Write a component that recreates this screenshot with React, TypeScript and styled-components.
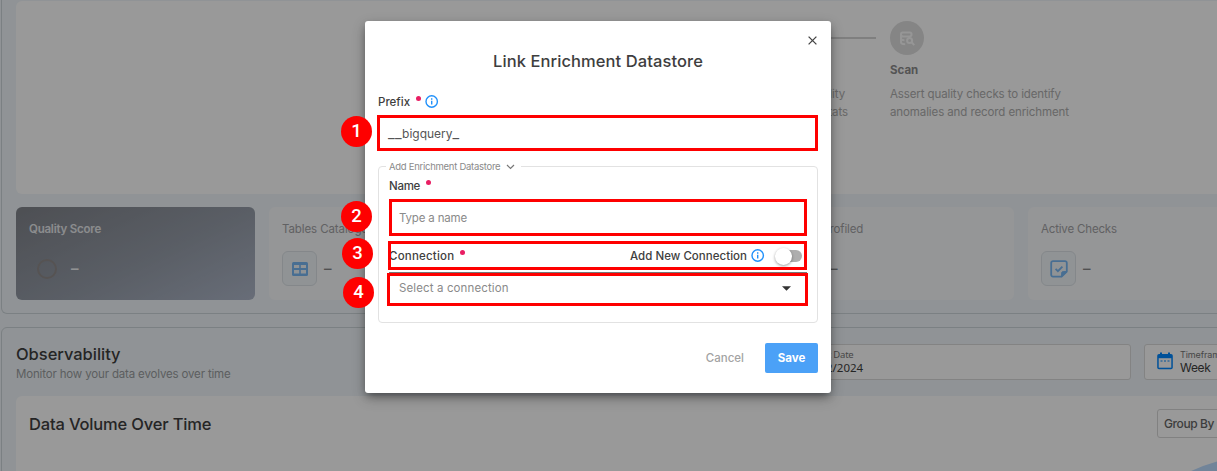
import React from 'react';
import styled, { createGlobalStyle } from 'styled-components';

const GlobalStyle = createGlobalStyle`
  * { box-sizing: border-box; }
  body { margin: 0; overflow: hidden; background: #f0f6fa; font-family: Inter, 'Noto Sans', sans-serif; color: #3e3e3e; }
`;

const Text = styled.span<{ $size?: number; $weight?: number; $track?: number; $color?: string; $line?: number }>`
  font-size: ${p => p.$size ?? 11.5}px;
  font-weight: ${p => p.$weight ?? 400};
  letter-spacing: ${p => p.$track ?? 0}px;
  line-height: ${p => p.$line ?? 18}px;
  color: ${p => p.$color ?? '#3e3e3e'};
  white-space: nowrap;
`;

/* Dashboard */
const Viewport = styled.div`
  position: relative;
  width: 1217px;
  height: 471px;
  overflow: hidden;
`;
const Page = styled.main`
  width: 1282px;
  padding-left: 1px;
  display: flex;
  flex-direction: column;
  gap: 13px;
`;
const Panel = styled.section<{ $first?: boolean }>`
  display: flex;
  flex-direction: column;
  gap: ${p => (p.$first ? 13 : 16)}px;
  padding: ${p => (p.$first ? '1px 14px 13px' : '16px 14px')};
  border: 1px solid #cdd5da;
  border-top-width: ${p => (p.$first ? 0 : 1)}px;
  border-radius: ${p => (p.$first ? '0 0 6px 6px' : '6px')};
`;
const StepsCard = styled.div`
  height: 193px;
  padding: 20px 0 0 651px;
  display: flex;
  background: #fff;
  border-radius: 6px;
`;
const Step = styled.div`
  width: 223px;
  display: flex;
  flex-direction: column;
`;
const StepTop = styled.div`
  display: flex;
  align-items: center;
  margin-bottom: 6px;
`;
const StepCircle = styled.div`
  width: 34px;
  height: 34px;
  border-radius: 50%;
  background: #dedede;
  display: grid;
  place-items: center;
`;
const StepLine = styled.div`
  flex: 1;
  height: 2px;
  margin: 0 14px;
  background: #d4d4d4;
`;
const StepText = styled.div<{ $right?: boolean }>`
  width: 181px;
  margin-top: 6px;
  display: flex;
  flex-direction: column;
  align-items: ${p => (p.$right ? 'flex-end' : 'flex-start')};
  & > span:first-child { padding-right: ${p => (p.$right ? 3 : 0)}px; }
`;
const Stats = styled.div`
  display: grid;
  grid-template-columns: repeat(5, 239px);
  gap: 14px;
`;
const StatCard = styled.div<{ $dark?: boolean }>`
  height: 93px;
  padding: 13px;
  display: flex;
  flex-direction: column;
  gap: 13px;
  border-radius: 6px;
  background: ${p => (p.$dark ? 'linear-gradient(155deg, #81848b, #969da9 55%, #aeb7c9)' : '#f9fafc')};
`;
const StatTitle = styled.div<{ $end?: boolean }>`
  width: ${p => (p.$end ? '75px' : 'auto')};
  height: 18px;
  display: flex;
  line-height: 18px;
`;
const StatRow = styled.div`
  display: flex;
  align-items: center;
  gap: 7px;
`;
const IconBox = styled.div<{ $plain?: boolean }>`
  width: 35px;
  height: 35px;
  display: grid;
  place-items: center;
  border-radius: 6px;
  border: ${p => (p.$plain ? 0 : 1)}px solid #dce2e7;
  background: ${p => (p.$plain ? 'none' : '#f0f5f9')};
`;
const Ring = styled.div`
  width: 20px;
  height: 20px;
  border: 2px solid #8f8b8a;
  border-radius: 50%;
`;
const SectionHead = styled.header`
  height: 36px;
  display: flex;
  gap: 13px;
`;
const Headings = styled.div`
  flex: 1;
  display: flex;
  flex-direction: column;
`;
const Field = styled.div<{ $width: number }>`
  width: ${p => p.$width}px;
  height: 36px;
  padding-left: 12px;
  display: flex;
  align-items: center;
  gap: 7px;
  background: #fff;
  border: 1px solid #dadada;
  border-radius: 3px;
  & > svg { margin-top: -2px; }
`;
const FieldText = styled.div<{ $system?: boolean }>`
  display: flex;
  flex-direction: column;
  margin-top: -1px;
  ${p => (p.$system ? "& > span { font-family: 'Noto Sans', sans-serif; }" : '')}
`;
const ChartCard = styled.div`
  height: 200px;
  padding: 13px;
  display: flex;
  flex-direction: column;
  gap: 22px;
  background: #fff;
  border-radius: 6px;
`;
const ChartHead = styled.div`
  display: flex;
  justify-content: space-between;
  align-items: center;
`;
const GroupBy = styled.div`
  width: 97px;
  height: 29px;
  padding-left: 6px;
  display: flex;
  align-items: center;
  border: 1px solid #d8d8d8;
  border-radius: 3px;
`;

/* Dialog */
const Backdrop = styled.div`
  position: absolute;
  inset: 0;
  padding: 21px 21px 0 0;
  display: flex;
  justify-content: center;
  align-items: flex-start;
  background: rgba(0, 0, 0, 0.4);
`;
const Dialog = styled.div`
  width: 466px;
  height: 372px;
  padding: 0 13px;
  display: flex;
  flex-direction: column;
  background: #fff;
  border-radius: 3px;
  box-shadow: 0 4px 8px -2px rgba(0, 0, 0, 0.4), 0 5px 14px rgba(0, 0, 0, 0.24);
`;
const CloseRow = styled.div`
  height: 28px;
  padding: 15px 1.5px 0 0;
  display: flex;
  justify-content: flex-end;
  & > svg { display: block; }
`;
const DialogTitle = styled.div`
  height: 24px;
  display: flex;
  justify-content: center;
  margin-bottom: 20px;
`;
const LabelRow = styled.div`
  height: 18px;
  display: flex;
  align-items: center;
`;
const Required = styled.i`
  width: 5px;
  height: 5px;
  margin: -7px 4px 0 6px;
  border-radius: 50%;
  background: #e91e63;
`;
const Control = styled.div<{ $height: number; $top: number; $line?: boolean }>`
  position: relative;
  height: ${p => p.$height}px;
  margin-top: ${p => p.$top}px;
  padding: ${p => (p.$line ? '0 16px 3px 10px' : '1px 10px 0')};
  display: flex;
  align-items: center;
  justify-content: space-between;
  border-top: ${p => (p.$line ? '1px solid #777' : '0')};
`;
const Group = styled.fieldset`
  min-width: 0;
  height: 163px;
  margin: 10px 0 0;
  padding: 0;
  border: 1px solid #e2e2e2;
  border-radius: 4px;
`;
const GroupLegend = styled.legend`
  width: 135px;
  height: 13px;
  margin-left: 7px;
  padding: 0 0 0 3px;
  display: flex;
  align-items: center;
  gap: 6px;
`;
const GroupBody = styled.div`
  padding: 4px 10px 0;
  display: flex;
  flex-direction: column;
`;
const ConnectionRow = styled.div`
  position: relative;
  height: 28px;
  margin-top: 7px;
  display: flex;
  align-items: center;
  justify-content: space-between;
`;
const ToggleGroup = styled.div`
  display: flex;
  align-items: center;
  gap: 4px;
  padding-right: 5px;
`;
const Switch = styled.div`
  width: 22px;
  height: 12px;
  margin-left: 11px;
  border-radius: 6px;
  background: #aeaeae;
  display: flex;
  align-items: center;
`;
const Knob = styled.div`
  flex: none;
  width: 17px;
  height: 17px;
  margin-left: -5px;
  border-radius: 50%;
  background: #fff;
  box-shadow: 0 1px 3px rgba(0, 0, 0, 0.4);
`;
const Actions = styled.div`
  margin-top: 20px;
  display: flex;
  justify-content: flex-end;
  align-items: center;
  gap: 21px;
`;
const SaveButton = styled.div`
  width: 53px;
  height: 30px;
  display: grid;
  place-items: center;
  border-radius: 2px;
  background: #4ba1f7;
`;

/* Numbered callouts laid over the form */
const Outline = styled.div<{ $inset: string }>`
  position: absolute;
  inset: ${p => p.$inset};
  border: 3px solid #fe0000;
`;
const Badge = styled.div<{ $left: number; $top: number }>`
  position: absolute;
  left: ${p => p.$left}px;
  top: ${p => p.$top}px;
  width: 31px;
  height: 31px;
  border-radius: 50%;
  background: #fe0000;
  color: #fff;
  font: 500 18.5px/30px Roboto, sans-serif;
  text-align: center;
`;

const InfoIcon = () => (
  <svg width="14" height="14" viewBox="0 0 14 14" fill="none" stroke="#2090fa">
    <circle cx="6.700" cy="6.500" r="5.700" strokeWidth="1.400" />
    <path d="M6.700 5.800v3.700M6.700 3.300v1.400" strokeWidth="1.400" />
  </svg>
);
const TableIcon = () => (
  <svg width="16" height="14" viewBox="0 0 16 14">
    <rect width="16" height="14" rx="1.5" fill="#78b8f4" />
    <path d="M2 3h5.2v3H2zM8.8 3H14v3H8.8zM2 8h5.2v3.6H2zM8.8 8H14v3.6H8.8z" fill="#f0f5f9" />
  </svg>
);
const CheckNoteIcon = () => (
  <svg width="18" height="18" viewBox="0 0 18 18" fill="none" stroke="#78b8f4" strokeWidth="1.8">
    <path d="M11.6 16.6H3a1.8 1.8 0 0 1-1.8-1.8V3A1.8 1.8 0 0 1 3 1.2h12A1.8 1.8 0 0 1 16.8 3v8.6z" strokeLinejoin="round" />
    <path d="M11.6 16.6v-3.4a1.6 1.6 0 0 1 1.6-1.6h3.6z" fill="#78b8f4" strokeWidth="1" />
    <path d="m5.600 8.900 2.300 2.300 4.500-4.500" />
  </svg>
);
const CalendarIcon = () => (
  <svg width="16" height="18" viewBox="0 0 16 18">
    <path d="M2 2h1V.5h2V2h6V.5h2V2h1a1.800 1.800 0 0 1 1.800 1.800v11.700a1.800 1.800 0 0 1-1.800 1.800H2a1.800 1.800 0 0 1-1.800-1.800V3.800A1.800 1.800 0 0 1 2 2z" fill="#0087ff" />
    <path d="M1.700 6.200h12.600v9.500H1.700z" fill="#fff" />
    <path d="M3.500 9h2M7 9h2M10.500 9h2" stroke="#0087ff" strokeWidth="1.200" />
  </svg>
);
const ScanIcon = () => (
  <svg width="16" height="15" viewBox="0 0 16 15" fill="none" stroke="#fafafa" strokeWidth="2">
    <rect x="2" y="1.400" width="10.500" height="4" rx="1.800" />
    <path d="M2 3.500v7.800c0 1.300 1.700 2 4.200 2M2 8.200c.6.700 1.800 1 3.400 1.100" />
    <circle cx="10.600" cy="9.400" r="2.500" />
    <path d="m12.500 11.300 2.800 2.800" />
  </svg>
);

const Stat = ({ label, track, icon, hasEnd }: { label: string; track: number; icon: React.ReactNode; hasEnd?: boolean }) => (
  <StatCard>
    <StatTitle $end={hasEnd}><Text $track={track} $color="#a2a2a5">{label}</Text></StatTitle>
    <StatRow>
      <IconBox>{icon}</IconBox>
      <Text $size={15} $weight={500} $color="#858588">–</Text>
    </StatRow>
  </StatCard>
);

export default function App() {
  return (
    <>
      <GlobalStyle />
      <Viewport>
        <Page>
          <Panel $first>
            <StepsCard>
              <Step>
                <StepTop><StepCircle /><StepLine /></StepTop>
                <Text $weight={700} $color="#909090">Profile</Text>
                <StepText $right>
                  <Text $track={-0.1} $color="#adadad">Infer data quality</Text>
                  <Text $track={-0.1} $color="#adadad">checks and stats</Text>
                </StepText>
              </Step>
              <Step>
                <StepTop><StepCircle><ScanIcon /></StepCircle></StepTop>
                <Text $weight={700} $color="#8c8c8c">Scan</Text>
                <StepText>
                  <Text $track={-0.11} $color="#adadad">Assert quality checks to identify</Text>
                  <Text $track={-0.1} $color="#adadad">anomalies and record enrichment</Text>
                </StepText>
              </Step>
            </StepsCard>
            <Stats>
              <StatCard $dark>
                <StatTitle><Text $weight={600} $track={-0.22} $color="#e8eaed">Quality Score</Text></StatTitle>
                <StatRow>
                  <IconBox $plain><Ring /></IconBox>
                  <Text $size={15} $weight={600} $color="#f2f4f6">–</Text>
                </StatRow>
              </StatCard>
              <Stat label="Tables Cataloged" track={-0.1} icon={<TableIcon />} />
              <Stat label="Records" track={0} icon={<TableIcon />} />
              <Stat label="Fields Profiled" track={-0.15} icon={<TableIcon />} hasEnd />
              <Stat label="Active Checks" track={-0.17} icon={<CheckNoteIcon />} />
            </Stats>
          </Panel>
          <Panel>
            <SectionHead>
              <Headings>
                <Text $size={16.5} $weight={500} $track={-0.03} $line={20}>Observability</Text>
                <Text $track={-0.16} $line={20} $color="#9a9da0">Monitor how your data evolves over time</Text>
              </Headings>
              <Field $width={365}>
                <CalendarIcon />
                <FieldText $system>
                  <Text $size={9.5} $track={-0.2} $line={12} $color="#777">Report Date</Text>
                  <Text $size={11.5} $line={13}>12/02/2024</Text>
                </FieldText>
              </Field>
              <Field $width={123}>
                <CalendarIcon />
                <FieldText>
                  <Text $size={9} $track={-0.1} $line={12} $color="#777">Timeframe</Text>
                  <Text $size={12} $track={-0.3} $line={13}>Week</Text>
                </FieldText>
              </Field>
            </SectionHead>
            <ChartCard>
              <ChartHead>
                <Text $size={16.5} $weight={500} $track={-0.17} $line={20}>Data Volume Over Time</Text>
                <GroupBy><Text $size={12} $weight={500} $track={-0.4} $color="#666">Group By</Text></GroupBy>
              </ChartHead>
              <svg width="1225" height="60" viewBox="0 0 1225 60">
                <path d="M1156 14Q1176 4 1194 0L1225 0V60H1100V40Z" fill="#bddcff" />
              </svg>
            </ChartCard>
          </Panel>
        </Page>

        <Backdrop>
          <Dialog>
            <CloseRow>
              <svg width="9" height="9" viewBox="0 0 9 9" stroke="#444" strokeWidth="1.300"><path d="m.6.600 7.800 7.800M8.400.600.600 8.400" /></svg>
            </CloseRow>
            <DialogTitle><Text $size={16.5} $weight={500} $track={0.09} $line={24}>Link Enrichment Datastore</Text></DialogTitle>
            <LabelRow><Text $weight={500}>Prefix</Text><Required /><InfoIcon /></LabelRow>
            <Control $height={34} $top={5}>
              <Text $size={12} $color="#555">
                <Text $size={14.5} $color="#555" $track={0.4}>__</Text>bigquery<Text $size={14.5} $color="#555">_</Text>
              </Text>
              <Outline $inset="-1px 0 -1px -1px" />
              <Badge $left={-37} $top={0}>1</Badge>
            </Control>
            <Group>
              <GroupLegend>
                <Text $size={9.5} $track={-0.27} $line={13} $color="#8a8a8a">Add Enrichment Datastore</Text>
                <svg width="9" height="6" viewBox="0 0 9 6" fill="none" stroke="#777" strokeWidth="1.200"><path d="m1 1 3.500 3.500L8 1" /></svg>
              </GroupLegend>
              <GroupBody>
                <LabelRow><Text $weight={500} $track={-0.3}>Name</Text><Required /></LabelRow>
                <Control $height={35} $top={5}>
                  <Text $track={-0.17} $color="#8a8a8a">Type a name</Text>
                  <Outline $inset="-1px 0 -1px 0" />
                  <Badge $left={-48} $top={1}>2</Badge>
                </Control>
                <ConnectionRow>
                  <LabelRow><Text $weight={500} $track={0.2}>Connection</Text><Required /></LabelRow>
                  <ToggleGroup>
                    <Text $weight={500} $track={0.03}>Add New Connection</Text>
                    <InfoIcon />
                    <Switch><Knob /></Switch>
                  </ToggleGroup>
                  <Outline $inset="-1px 0 0 -1px" />
                  <Badge $left={-47} $top={-4}>3</Badge>
                </ConnectionRow>
                <Control $height={34} $top={2} $line>
                  <Text $track={0.12} $color="#8a8a8a">Select a connection</Text>
                  <svg width="9" height="5" viewBox="0 0 9 5"><path d="M0 .300h9L4.500 4.800z" fill="#333" /></svg>
                  <Outline $inset="0 -1px 0 -2px" />
                  <Badge $left={-46} $top={4}>4</Badge>
                </Control>
              </GroupBody>
            </Group>
            <Actions>
              <Text $weight={500} $color="#a3a3a3">Cancel</Text>
              <SaveButton><Text $weight={700} $color="#fff">Save</Text></SaveButton>
            </Actions>
          </Dialog>
        </Backdrop>
      </Viewport>
    </>
  );
}
